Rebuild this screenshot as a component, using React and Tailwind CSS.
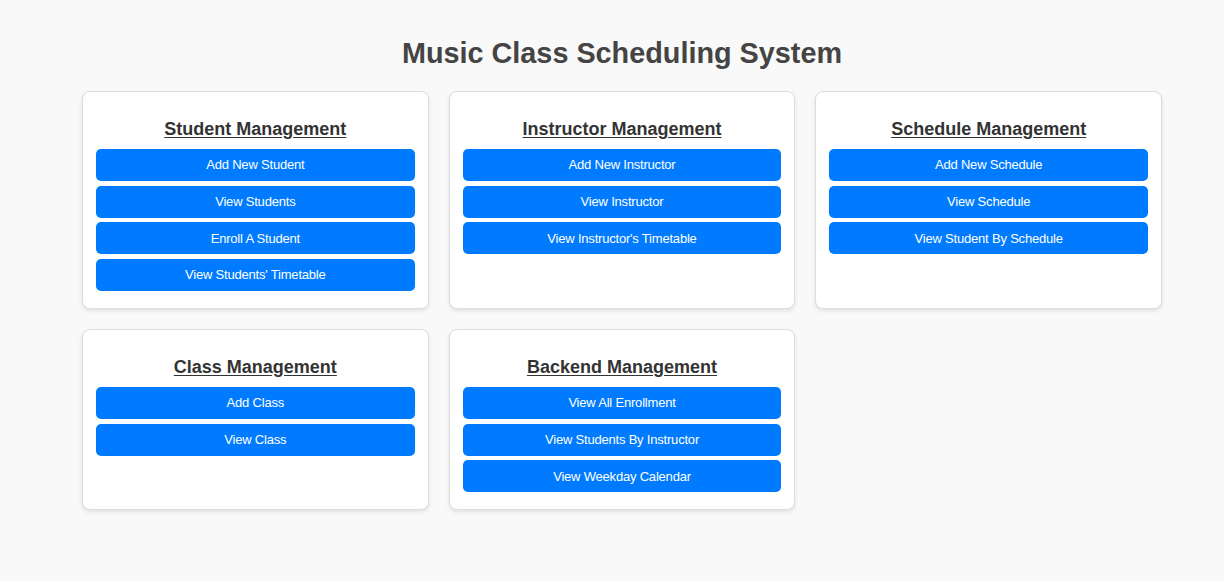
const sections = [
  {
    title: "Student Management",
    actions: ["Add New Student", "View Students", "Enroll A Student", "View Students' Timetable"],
  },
  {
    title: "Instructor Management",
    actions: ["Add New Instructor", "View Instructor", "View Instructor's Timetable"],
  },
  {
    title: "Schedule Management",
    actions: ["Add New Schedule", "View Schedule", "View Student By Schedule"],
  },
  {
    title: "Class Management",
    actions: ["Add Class", "View Class"],
  },
  {
    title: "Backend Management",
    actions: ["View All Enrollment", "View Students By Instructor", "View Weekday Calendar"],
  },
];

function Section({ title, actions }) {
  return (
    <div className="bg-white border border-[#dddddd] rounded-lg shadow-[0_2px_4px_rgba(0,0,0,0.1)] pt-[26px] pb-[17px] px-[13px]">
      <h2 className="text-center text-[18px] leading-[22px] font-bold text-[#333333] underline underline-offset-2 mb-[9px]">
        {title}
      </h2>
      <div className="flex flex-col gap-[4.67px]">
        {actions.map((a) => (
          <button
            key={a}
            className="w-full h-[32px] bg-[#007bff] text-white text-[13px] tracking-[-0.2px] rounded-[5px] hover:bg-[#0069d9]"
          >
            {a}
          </button>
        ))}
      </div>
    </div>
  );
}

export default function App() {
  return (
    <div className="min-h-screen bg-[#f9f9f9] pl-[20px] pt-[35px] font-['Liberation_Sans',Arial,sans-serif]">
      <div className="w-[1080px] mx-auto">
        <h1 className="text-center text-[28.8px] leading-[36px] font-bold text-[#444444] mb-[20px]">
          Music Class Scheduling System
        </h1>
        <div className="grid grid-cols-3 gap-[20px]">
          {sections.map((s) => (
            <Section key={s.title} {...s} />
          ))}
        </div>
      </div>
    </div>
  );
}
